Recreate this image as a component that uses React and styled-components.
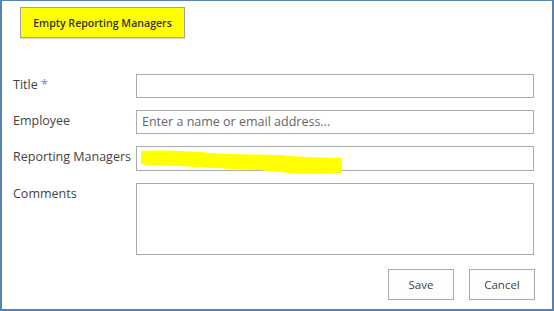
import React from "react";
import styled, { createGlobalStyle } from "styled-components";

const Global = createGlobalStyle`
  html, body { margin: 0; padding: 0; background: #fff; }
  * { box-sizing: border-box; }
`;

const Frame = styled.div`
  width: 554px;
  height: 311px;
  border: 2px solid #5583b3;
  border-top-width: 1px;
  background: #fff;
  font-family: "Open Sans", "Liberation Sans", sans-serif;
  color: #444;
  padding: 6px 17px 0 11px;
  display: flex;
  flex-direction: column;
`;

const Toolbar = styled.div`
  display: flex;
  padding-left: 7px;
`;

const HighlightButton = styled.button`
  width: 165px;
  height: 31px;
  background: #ffff00;
  border: 1px solid #9da3ad;
  box-shadow: 0 1px 1px rgba(0, 0, 0, 0.15);
  font-family: inherit;
  font-weight: 600;
  font-size: 10.6px;
  color: #333;
  padding: 0;
`;

const Form = styled.div`
  display: flex;
  flex-direction: column;
  gap: 12px;
  margin-top: 36px;
`;

const Row = styled.div`
  display: grid;
  grid-template-columns: 123px 398px;
  align-items: start;
`;

const Label = styled.div`
  font-size: 12.5px;
  line-height: 18px;
  padding-top: ${(p) => p.$top || 2}px;
  color: #444;
  white-space: nowrap;
`;

const Star = styled.span`
  color: #6d8fb8;
`;

const Field = styled.div`
  position: relative;
  height: ${(p) => p.$h || 24}px;
  border: 1px solid #ababab;
  background: #fff;
  font-size: 12.5px;
  color: #666;
  padding: 3px 5px;
  line-height: 16px;
`;

const Scribble = styled.svg`
  position: absolute;
  left: 3px;
  top: 2px;
  overflow: visible;
`;

const Actions = styled.div`
  display: flex;
  justify-content: flex-end;
  gap: 15px;
  margin-top: 14px;
`;

const ActionButton = styled.button`
  width: 66px;
  height: 31px;
  background: #fdfdfd;
  border: 1px solid #ababab;
  font-family: inherit;
  font-size: 11.5px;
  color: #444;
  padding: 0;
`;

export default function App() {
  return (
    <>
      <Global />
      <Frame>
        <Toolbar>
          <HighlightButton>Empty Reporting Managers</HighlightButton>
        </Toolbar>
        <Form>
          <Row>
            <Label>
              Title <Star>*</Star>
            </Label>
            <Field />
          </Row>
          <Row>
            <Label $top={0}>Employee</Label>
            <Field>Enter a name or email address...</Field>
          </Row>
          <Row>
            <Label>Reporting Managers</Label>
            <Field $h={25}>
              <Scribble width="204" height="26" viewBox="0 0 204 26">
                <path
                  d="M1 2 C20 1 40 2 60 3 C90 6 110 5 140 6 C160 8 180 9 202 9 L202 24 C185 25 170 25 150 24 C130 22 110 20 90 20 C60 18 40 17 20 16 C10 16 4 16 1 15 Z"
                  fill="#ffff00"
                />
              </Scribble>
            </Field>
          </Row>
          <Row>
            <Label $top={0}>Comments</Label>
            <Field $h={72} />
          </Row>
        </Form>
        <Actions>
          <ActionButton>Save</ActionButton>
          <ActionButton>Cancel</ActionButton>
        </Actions>
      </Frame>
    </>
  );
}
